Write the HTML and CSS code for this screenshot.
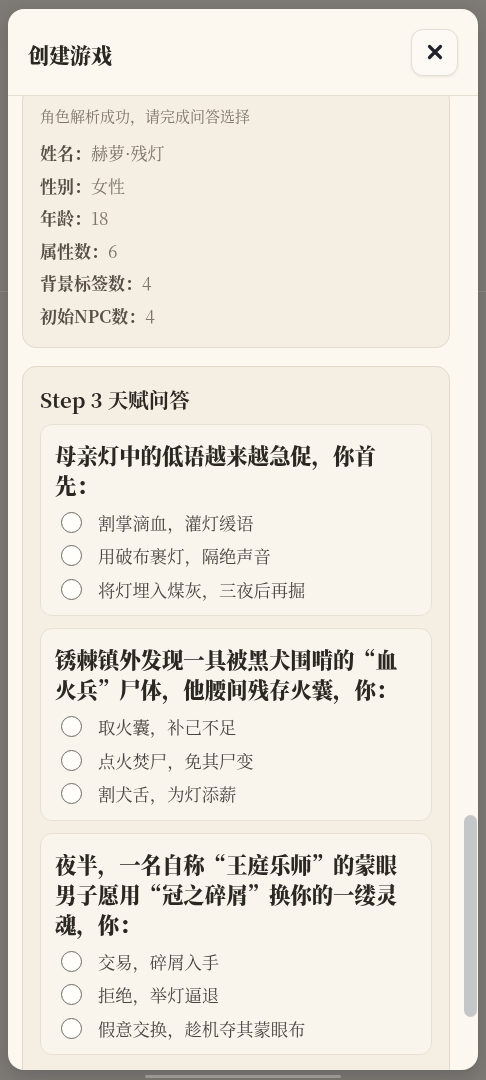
FILE: index.html
```html
<!DOCTYPE html>
<html lang="zh-CN">
<head>
  <meta charset="UTF-8" />
  <meta name="viewport" content="width=device-width, initial-scale=1.0"/>
  <title>创建游戏</title>
  <link rel="stylesheet" href="styles.css">
</head>
<body>
  <div class="page-behind">
    <div class="page-line"></div>
  </div>
  <div class="home-bar"></div>

  <div class="modal">
    <header class="modal-head">
      <h2>创建游戏</h2>
      <button class="close-btn" aria-label="关闭">
        <svg width="16" height="16" viewBox="0 0 16 16">
          <path d="M2.5 2.5 L13.5 13.5 M13.5 2.5 L2.5 13.5" stroke="#1f2329" stroke-width="3.2" stroke-linecap="round" fill="none"/>
        </svg>
      </button>
    </header>

    <div class="modal-body">
      <div class="scroll-inner">
        <section class="card info-card">
          <p class="hint">角色解析成功，请完成问答选择</p>
          <div class="row"><b>姓名：</b>赫萝·残灯</div>
          <div class="row"><b>性别：</b>女性</div>
          <div class="row"><b>年龄：</b>18</div>
          <div class="row"><b>属性数：</b>6</div>
          <div class="row"><b>背景标签数：</b>4</div>
          <div class="row"><b>初始NPC数：</b>4</div>
        </section>

        <section class="card step-card">
          <h3>Step 3 天赋问答</h3>

          <div class="question">
            <p class="q-text">母亲灯中的低语越来越急促，你首先：</p>
            <label class="option"><input type="radio" name="q1"><span>割掌滴血，灌灯缓语</span></label>
            <label class="option"><input type="radio" name="q1"><span>用破布裹灯，隔绝声音</span></label>
            <label class="option"><input type="radio" name="q1"><span>将灯埋入煤灰，三夜后再掘</span></label>
          </div>

          <div class="question">
            <p class="q-text">锈棘镇外发现一具被黑犬围啃的“血火兵”尸体，他腰间残存火囊，你：</p>
            <label class="option"><input type="radio" name="q2"><span>取火囊，补己不足</span></label>
            <label class="option"><input type="radio" name="q2"><span>点火焚尸，免其尸变</span></label>
            <label class="option"><input type="radio" name="q2"><span>割犬舌，为灯添薪</span></label>
          </div>

          <div class="question">
            <p class="q-text">夜半，一名自称“王庭乐师”的蒙眼男子愿用“冠之碎屑”换你的一缕灵魂，你：</p>
            <label class="option"><input type="radio" name="q3"><span>交易，碎屑入手</span></label>
            <label class="option"><input type="radio" name="q3"><span>拒绝，举灯逼退</span></label>
            <label class="option"><input type="radio" name="q3"><span>假意交换，趁机夺其蒙眼布</span></label>
          </div>
        </section>
      </div>
    </div>

    <div class="scroll-thumb"></div>
  </div>
</body>
</html>
```

FILE: styles.css
```css
:root {
  --backdrop: #7e7b77;
  --modal-bg: #fcf8f0;
  --card-bg: #f5eee2;
  --card-border: #e3dacb;
  --q-bg: #f9f5ec;
  --q-border: #e8e0d3;
  --text-dark: #2b2723;
  --text-label: #564f47;
  --text-muted: #7d746a;
}

* {
  box-sizing: border-box;
}

body {
  margin: 0;
  height: 1080px;
  overflow: hidden;
  background: var(--backdrop);
  font-family: "Noto Serif CJK SC", "Noto Sans CJK SC", "Liberation Serif", serif;
  color: var(--text-dark);
}

/* page sous la modale */
.page-behind {
  height: 1080px;
  padding-top: 291px;
}

.page-line {
  height: 1px;
  background: #8f8c87;
}

.home-bar {
  position: fixed;
  left: 145px;
  bottom: 2px;
  width: 196px;
  height: 3px;
  border-radius: 2px;
  background: #a9a6a1;
}

.modal {
  position: fixed;
  top: 9px;
  left: 8px;
  width: 470px;
  height: 1061px;
  background: var(--modal-bg);
  border-radius: 16px;
  display: flex;
  flex-direction: column;
  overflow: hidden;
  box-shadow: 0 6px 20px rgba(0, 0, 0, 0.18);
}

.modal-head {
  height: 87px;
  flex-shrink: 0;
  display: flex;
  align-items: center;
  justify-content: space-between;
  padding: 0 20px;
  border-bottom: 1px solid #e6ded1;
}

.modal-head h2 {
  margin: 3px 0 0;
  font-size: 21px;
  font-weight: 900;
  color: var(--text-dark);
}

.close-btn {
  width: 47px;
  height: 47px;
  border: 1px solid #e5ded3;
  border-radius: 12px;
  background: #fdfaf5;
  box-shadow: 0 1px 3px rgba(0, 0, 0, 0.08);
  display: flex;
  align-items: center;
  justify-content: center;
  padding: 0;
  cursor: pointer;
}

.modal-body {
  flex: 1;
  overflow: hidden;
  padding: 0 28px 0 14px;
}

/* contenu deja defile */
.scroll-inner {
  margin-top: -10px;
}

.card {
  background: var(--card-bg);
  border: 1px solid var(--card-border);
  border-radius: 14px;
  padding: 18px 17px;
}

.info-card {
  padding-bottom: 14px;
  margin-bottom: 18px;
}

.hint {
  margin: 0 0 10px;
  font-size: 15px;
  line-height: 22px;
  color: var(--text-muted);
}

.row {
  font-size: 17px;
  line-height: 32.6px;
  color: var(--text-muted);
}

.row b {
  color: var(--text-label);
  font-weight: 700;
}

.step-card {
  padding: 17px 17px 30px;
}

.step-card h3 {
  margin: 0 0 10px;
  font-size: 20.5px;
  line-height: 30px;
  font-weight: 700;
}

.question {
  background: var(--q-bg);
  border: 1px solid var(--q-border);
  border-radius: 12px;
  padding: 15px 14px 9px;
  margin-bottom: 12px;
}

.q-text {
  margin: 0 0 6px;
  font-size: 21.4px;
  line-height: 30px;
  font-weight: 900;
  color: var(--text-dark);
}

.option {
  display: flex;
  align-items: center;
  gap: 16px;
  height: 33.5px;
  padding-left: 6px;
  font-size: 17.3px;
  color: #4b453f;
}

.option input {
  appearance: none;
  margin: 0;
  width: 21px;
  height: 21px;
  border: 1.8px solid #6f6a65;
  border-radius: 50%;
  background: #fffefb;
}

.scroll-thumb {
  position: absolute;
  top: 806px;
  right: 1px;
  width: 13px;
  height: 202px;
  border-radius: 7px;
  background: #c4c6c8;
}
```
